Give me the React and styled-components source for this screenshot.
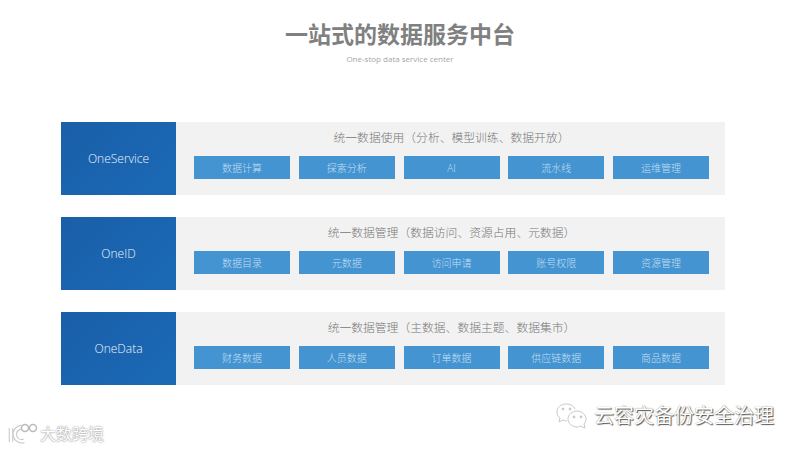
import styled, { createGlobalStyle } from "styled-components";

const rows = [
    {
        name: "OneService",
        title: "统一数据使用（分析、模型训练、数据开放）",
        items: ["数据计算", "探索分析", "AI", "流水线", "运维管理"],
    },
    {
        name: "OneID",
        title: "统一数据管理（数据访问、资源占用、元数据）",
        items: ["数据目录", "元数据", "访问申请", "账号权限", "资源管理"],
    },
    {
        name: "OneData",
        title: "统一数据管理（主数据、数据主题、数据集市）",
        items: ["财务数据", "人员数据", "订单数据", "供应链数据", "商品数据"],
    },
];

function App() {
    return (
        <Page>
            <GlobalStyle />
            <Header>
                <Title>一站式的数据服务中台</Title>
                <Subtitle>One-stop data service center</Subtitle>
            </Header>

            <Rows>
                {rows.map((row) => (
                    <Row key={row.name}>
                        <RowName>{row.name}</RowName>
                        <RowBody>
                            <RowTitle>{row.title}</RowTitle>
                            <Buttons>
                                {row.items.map((item) => (
                                    <Button key={item}>{item}</Button>
                                ))}
                            </Buttons>
                        </RowBody>
                    </Row>
                ))}
            </Rows>

            {/* Watermarks */}
            <LeftMark>
                <svg width="30" height="22" viewBox="0 0 30 22" fill="none">
                    <path d="M3 5v14" stroke="#c4c4c4" strokeWidth="4.5" />
                    <path d="M14 4C8 5 6 9 7 13c1 4 5 6 9 5" stroke="#c4c4c4" strokeWidth="4.5" />
                    <path d="M3 5v14" stroke="#fff" strokeWidth="2.5" />
                    <path d="M14 4C8 5 6 9 7 13c1 4 5 6 9 5" stroke="#fff" strokeWidth="2.5" />
                    <circle cx="17" cy="5" r="3.5" fill="#fff" stroke="#bbb" strokeWidth="1.5" />
                    <circle cx="25" cy="5" r="3.5" fill="#fff" stroke="#bbb" strokeWidth="1.5" />
                </svg>
                <LeftMarkText>大数跨境</LeftMarkText>
            </LeftMark>
            <RightMark>
                <svg width="34" height="28" viewBox="0 0 34 28" fill="none" stroke="#c8c8c8" strokeWidth="1">
                    <path d="M20 7c-1-3-5-5-9-5C6 2 2 5 2 10c0 3 1 5 3 6l-1 4 4-2c1 0 2 1 4 1" />
                    <path d="M31 17c0-4-4-8-9-8s-9 4-9 8 4 8 9 8c1 0 2 0 3-1l5 2-1-4c1-1 2-3 2-5z" />
                    <circle cx="8" cy="7" r="1" fill="#c8c8c8" />
                    <circle cx="15" cy="7" r="1" fill="#c8c8c8" />
                    <circle cx="19" cy="15" r="1" fill="#c8c8c8" />
                    <circle cx="26" cy="15" r="1" fill="#c8c8c8" />
                </svg>
                <RightMarkText>云容灾备份安全治理</RightMarkText>
            </RightMark>
        </Page>
    );
}

export default App;

const GlobalStyle = createGlobalStyle`
    html, body {
        margin: 0;
        padding: 0;
        background: #fff;
    }
`;

const Page = styled.div`
    position: relative;
    width: 800px;
    height: 450px;
    overflow: hidden;
    background: #fff;
    font-family: "Open Sans", "Noto Sans CJK SC", sans-serif;
`;

const Header = styled.div`
    display: flex;
    flex-direction: column;
    align-items: center;
    padding-top: 19px;
    height: 103px;
    box-sizing: border-box;
`;

const Title = styled.div`
    font-size: 23px;
    line-height: 30px;
    font-weight: 700;
    color: #808080;
`;

const Subtitle = styled.div`
    margin-top: 3px;
    font-size: 8px;
    line-height: 14px;
    color: #a6a6a6;
`;

const Rows = styled.div`
    display: flex;
    flex-direction: column;
    gap: 22px;
    margin: 19px 0 0 61px;
    width: 664px;
`;

const Row = styled.div`
    display: flex;
    height: 73px;
    background: #f2f2f2;
`;

const RowName = styled.div`
    flex: 0 0 115px;
    display: flex;
    align-items: center;
    justify-content: center;
    box-sizing: border-box;
    font-size: 12px;
    font-weight: 300;
    color: #eef4fa;
    background: linear-gradient(135deg, #1a5fa8, #1b69b6);
`;

const RowBody = styled.div`
    flex: 1;
    display: flex;
    flex-direction: column;
    align-items: center;
    padding: 5px 16px 0 18px;
`;

const RowTitle = styled.div`
    font-size: 11.8px;
    line-height: 18px;
    font-weight: 300;
    color: #777;
    position: relative;
    top: 0.5px;
`;

const Buttons = styled.div`
    align-self: stretch;
    display: flex;
    justify-content: space-between;
    margin-top: 11px;
`;

const Button = styled.div`
    width: 96px;
    height: 23px;
    display: flex;
    align-items: center;
    justify-content: center;
    font-size: 10px;
    font-weight: 300;
    color: #c4dff3;
    background: #4394d0;
`;

const LeftMark = styled.div`
    position: absolute;
    left: 8px;
    top: 423px;
    display: flex;
    align-items: center;
    gap: 2px;
`;

const LeftMarkText = styled.span`
    font-size: 16px;
    line-height: 22px;
    color: #fff;
    text-shadow: 0 0 2px #999, 0 0 1px #999;
`;

const RightMark = styled.div`
    position: absolute;
    left: 555px;
    top: 402px;
    display: flex;
    align-items: center;
    gap: 5px;
`;

const RightMarkText = styled.span`
    font-size: 20px;
    line-height: 28px;
    color: #fff;
    text-shadow: 1px 1px 1px #555, 0 0 1px #777;
`;
